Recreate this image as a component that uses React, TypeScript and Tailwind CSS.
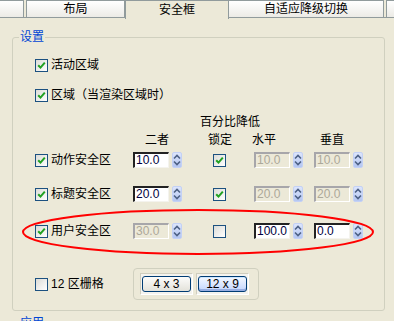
import React from "react";

function Check({ on }: { on?: boolean }) {
  return (
    <span className="w-[13px] h-[13px] shrink-0 border border-[#1C5180] bg-linear-to-br from-[#DCDCD7] to-white flex items-center justify-center">
      {on && (
        <svg width="9" height="9" viewBox="0 0 9 9">
          <path d="M1.2 4.2 L3.5 6.6 L7.8 1.6" stroke="#21A121" strokeWidth="2" fill="none" />
        </svg>
      )}
    </span>
  );
}

function Spin() {
  return (
    <span className="ml-[3px] w-[10px] h-[16px] shrink-0 rounded-[2px] border border-[#C3D1F6] bg-linear-to-b from-[#DCE5FC] to-[#B4C6F1] flex items-center justify-center">
      <svg width="8" height="14" viewBox="0 0 8 14">
        <path d="M1 5.5 L4 2.5 L7 5.5" stroke="#4D6185" strokeWidth="1.6" fill="none" />
        <path d="M1 8.5 L4 11.5 L7 8.5" stroke="#4D6185" strokeWidth="1.6" fill="none" />
      </svg>
    </span>
  );
}

function Field({ v, off }: { v: string; off?: boolean }) {
  return (
    <span
      className={
        off
          ? "w-[36px] h-[16px] shrink-0 border-t-2 border-l-2 border-[#A7A6AA] border-r border-b border-r-white border-b-white bg-[#ECE9D8] text-[#ACA899] pl-[1px] leading-[13px]"
          : "w-[36px] h-[16px] shrink-0 border-t-2 border-l-2 border-[#222] border-r border-b border-r-[#F4F3EE] border-b-[#F4F3EE] bg-white text-[#000040] pl-[1px] leading-[13px]"
      }
    >
      {v}
    </span>
  );
}

interface RowProps {
  label: string;
  a: string;
  aOff?: boolean;
  lock?: boolean;
  h: string;
  v: string;
  hvOff?: boolean;
  className?: string;
}

function SafeRow({ label, a, aOff, lock, h, v, hvOff, className }: RowProps) {
  return (
    <div className={`flex items-center h-[16px] ${className}`}>
      <div className="w-[98px] flex items-center gap-[3px]">
        <Check on />
        <span>{label}</span>
      </div>
      <Field v={a} off={aOff} />
      <Spin />
      <span className="ml-[31px]">
        <Check on={lock} />
      </span>
      <span className="ml-[28px] flex">
        <Field v={h} off={hvOff} />
      </span>
      <Spin />
      <span className="ml-[11px] flex">
        <Field v={v} off={hvOff} />
      </span>
      <Spin />
    </div>
  );
}

export default function App() {
  const tab = "h-[18px] border-t border-x border-b border-[#919B9C] bg-linear-to-b from-white to-[#ECEBE6] flex items-center justify-center";
  return (
    <div className="relative w-[394px] h-[321px] overflow-hidden bg-[#ECE9D8] text-[12px] leading-[16px] text-black font-['Liberation_Sans','Noto_Sans_CJK_SC',sans-serif]">
      {/* tab strip */}
      <div className="flex h-[19px] items-start">
        <div className={`w-[24px] ${tab} border-l-0`} />
        <div className="w-[2px] h-[18px] border-b border-[#919B9C]" />
        <div className={`w-[99px] ${tab}`}>布局</div>
        <div className="w-[104px] h-[19px] border-t border-x border-[#919B9C] bg-[#ECE9D8] flex items-center justify-center">
          安全框
        </div>
        <div className={`w-[155px] ${tab} border-l-0`}>自适应降级切换</div>
        <div className="w-[2px] h-[18px] border-b border-[#919B9C]" />
        <div className={`flex-1 ${tab} border-r-0`} />
      </div>

      {/* 设置 group */}
      <fieldset className="ml-[12px] mt-[10px] w-[373px] h-[282px] border border-[#D0D0BF] rounded-[3px]">
        <legend className="ml-[6px] px-[1px] text-[#0046D5]">设置</legend>
        <div className="pl-[22px] flex flex-col">
          <div className="mt-[12px] h-[16px] flex items-center gap-[3px]">
            <Check on />
            <span>活动区域</span>
          </div>
          <div className="mt-[14px] h-[16px] flex items-center gap-[3px]">
            <Check on />
            <span>区域（当渲染区域时）</span>
          </div>
          <div className="mt-[11px] pl-[165px]">百分比降低</div>
          <div className="mt-[2px] pl-[110px] flex">
            <span className="w-[63px]">二者</span>
            <span className="w-[44px]">锁定</span>
            <span className="w-[68px]">水平</span>
            <span>垂直</span>
          </div>
          <SafeRow className="mt-[4px]" label="动作安全区" a="10.0" lock h="10.0" v="10.0" hvOff />
          <SafeRow className="mt-[18px]" label="标题安全区" a="20.0" lock h="20.0" v="20.0" hvOff />
          <SafeRow className="mt-[21px]" label="用户安全区" a="30.0" aOff h="100.0" v="0.0" />

          <div className="mt-[29px] flex items-center">
            <div className="w-[98px] flex items-center gap-[3px]">
              <Check />
              <span>12 区栅格</span>
            </div>
            <div className="w-[126px] h-[32px] rounded-[4px] border border-[#D0D0BF] flex items-center pl-[6px] gap-[3px]">
              <div className="w-[53px] h-[22px] border-t border-l border-[#CFCDBE] border-r border-b border-r-white border-b-white bg-[#F4F3EE] flex items-center justify-center">
                <div className="w-[49px] h-[16px] rounded-[3px] border border-[#003C74] bg-linear-to-b from-[#FCFCFB] to-[#E3E2DA] flex items-center justify-center leading-[14px]">
                  4 x 3
                </div>
              </div>
              <div className="w-[53px] h-[22px] border-t border-l border-[#CFCDBE] border-r border-b border-r-white border-b-white bg-[#F4F3EE] flex items-center justify-center">
                <div className="w-[49px] h-[16px] rounded-[3px] border border-[#003C74] bg-linear-to-b from-[#F4F8FF] to-[#C3D5FD] shadow-[inset_0_-2px_0_#97AEE2,inset_0_1px_0_#CEE7FF] flex items-center justify-center leading-[14px]">
                  12 x 9
                </div>
              </div>
            </div>
          </div>
        </div>
      </fieldset>

      {/* 应用 group, cut off at the bottom */}
      <fieldset className="ml-[12px] mt-[4px] w-[373px] h-[40px] border border-[#D0D0BF] rounded-[3px]">
        <legend className="ml-[6px] px-[1px] text-[#0046D5]">应用</legend>
      </fieldset>

      {/* red annotation ring */}
      <svg className="absolute left-0 top-0 pointer-events-none" width="394" height="321">
        <ellipse cx="198" cy="232" rx="175" ry="22" stroke="#FF0000" strokeWidth="2" fill="none" />
      </svg>
    </div>
  );
}
